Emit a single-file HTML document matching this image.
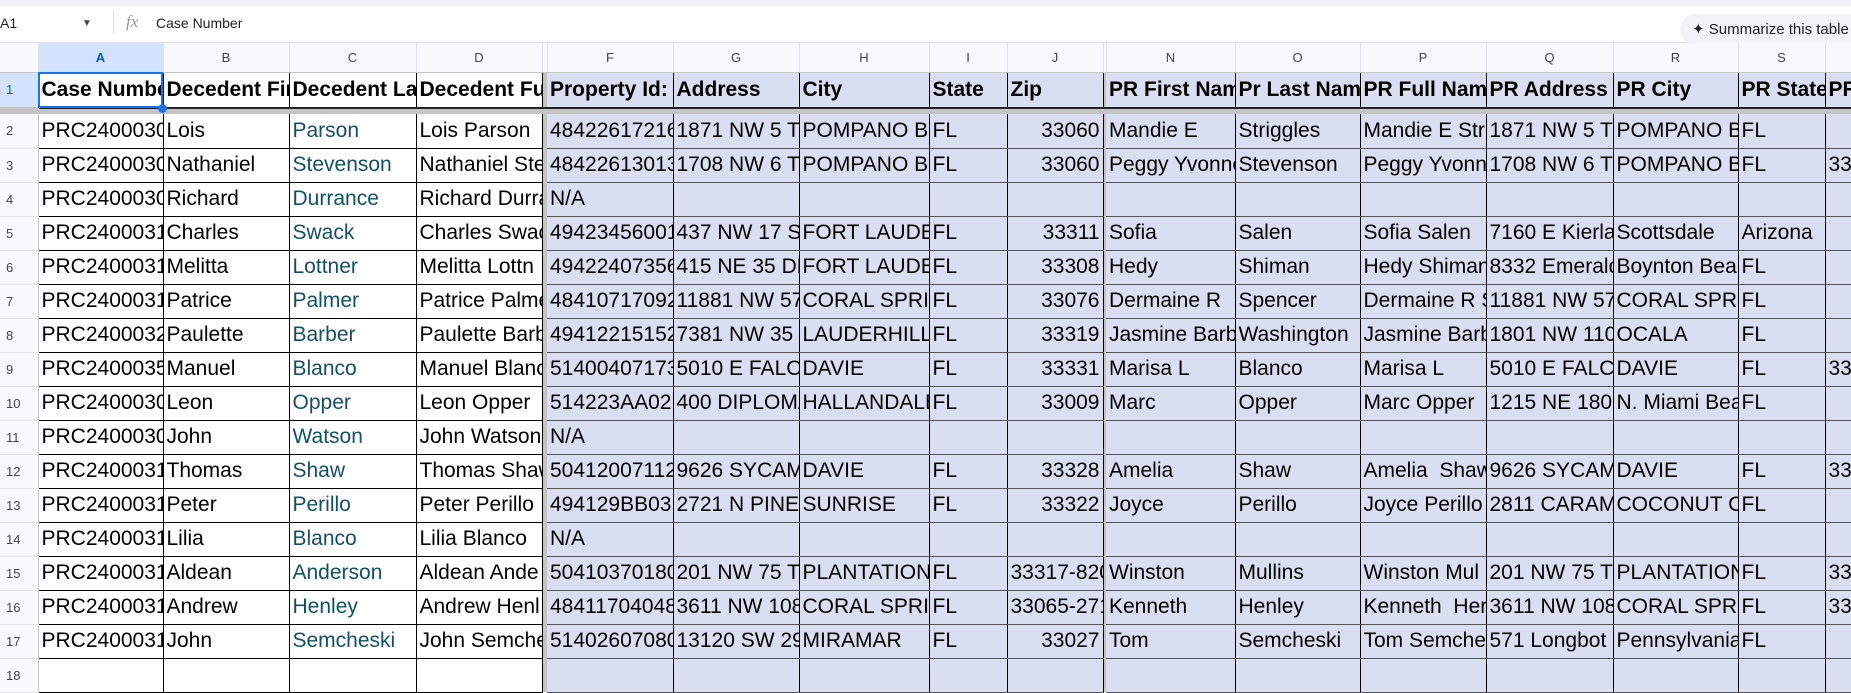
<!DOCTYPE html>
<html><head><meta charset="utf-8">
<style>
*{margin:0;padding:0;box-sizing:border-box}
body{width:1851px;height:660px;overflow:hidden;background:#fff;font-family:"Liberation Sans",sans-serif;position:relative}
.top{position:absolute;left:0;top:0;width:1851px;height:6px;background:#f0f2f5}
.fbar{position:absolute;left:0;top:6px;width:1851px;height:37px;background:#fff;border-bottom:1px solid #e1e3e6}
.fbar span{position:absolute;top:9px;font-size:14px;color:#202124}
.sum{position:absolute;left:1680px;top:8px;width:190px;height:30px;border-radius:15px;background:#f1f3f6;font-size:15px;color:#202124;padding:6px 0 0 12px;white-space:nowrap}
table{position:absolute;left:0;top:43px;border-collapse:collapse;table-layout:fixed;width:1851px}
td{overflow:hidden;white-space:nowrap;font-size:21px;color:#000;padding:0 3px;height:34px;border-right:1px solid #000;border-bottom:1px solid #000;vertical-align:middle}
tr.ch td{height:29px;background:#f8f9fa;font-size:13px;color:#444;text-align:center;border-right:1px solid #e1e3e6;border-bottom:1px solid #c4c7c5}
tr.ch td.sel{background:#d3e3fd;color:#0b57d0;font-weight:bold}
tr.hd td{height:36px;font-weight:bold;font-size:21px;border-bottom:2px solid #222}
tr.gb td{height:6px;background:#c4c4c4;border:none;padding:0}
td.rh{background:#f8f9fa;font-size:13px;color:#444;text-align:left;padding-left:6px;border-right:1px solid #c4c7c5;border-bottom:1px solid #e1e3e6}
tr.hd td.rh{background:#d3e3fd;color:#0b57d0;font-weight:normal;font-size:13px;border-bottom:2px solid #c4c4c4}
td.g{background:#c4c4c4;border:none;padding:0}
td.b{background:#d9dff0;border-bottom-color:#555}
td.c{color:#14505f;font-size:21px}
td.r{text-align:right}
td.ac{outline:2px solid #1a73e8;outline-offset:-2px}
</style></head><body>
<div class="top"></div>
<div class="fbar">
<span style="left:0">A1</span>
<span style="left:82px;font-size:10px;top:12px;color:#444">▼</span>
<span style="left:113px;top:5px;width:1px;height:22px;background:#ddd"></span>
<span style="left:126px;font-style:italic;font-family:'Liberation Serif',serif;font-size:17px;color:#999;top:6px">fx</span>
<span style="left:156px">Case Number</span>
<div class="sum">✦ Summarize this table</div>
</div>
<table>
<colgroup>
<col style="width:38px"><col style="width:125px"><col style="width:126px"><col style="width:127px"><col style="width:126px"><col style="width:5px"><col style="width:126px"><col style="width:126px"><col style="width:130px"><col style="width:78px"><col style="width:96px"><col style="width:3px"><col style="width:129px"><col style="width:125px"><col style="width:126px"><col style="width:127px"><col style="width:125px"><col style="width:87px"><col style="width:26px">
</colgroup>
<tr class="ch"><td></td><td class="sel">A</td><td>B</td><td>C</td><td>D</td><td class="g"></td><td>F</td><td>G</td><td>H</td><td>I</td><td>J</td><td class="g"></td><td>N</td><td>O</td><td>P</td><td>Q</td><td>R</td><td>S</td><td></td></tr>
<tr class="hd"><td class="rh">1</td><td class="ac">Case Number</td><td>Decedent First</td><td>Decedent Last</td><td>Decedent Full</td><td class="g"></td><td class="b">Property Id:</td><td class="b">Address</td><td class="b">City</td><td class="b">State</td><td class="b">Zip</td><td class="g"></td><td class="b">PR First Name</td><td class="b">Pr Last Name</td><td class="b">PR Full Name</td><td class="b">PR Address</td><td class="b">PR City</td><td class="b">PR State</td><td class="b">PR</td></tr>
<tr class="gb"><td colspan="19"></td></tr>
<tr><td class="rh">2</td><td>PRC2400030</td><td>Lois</td><td class="c">Parson</td><td>Lois Parson</td><td class="g"></td><td class="b">48422617216</td><td class="b">1871 NW 5 T</td><td class="b">POMPANO BE</td><td class="b">FL</td><td class="b r">33060</td><td class="g"></td><td class="b">Mandie E</td><td class="b">Striggles</td><td class="b">Mandie E Str</td><td class="b">1871 NW 5 T</td><td class="b">POMPANO B</td><td class="b">FL</td><td class="b"></td></tr>
<tr><td class="rh">3</td><td>PRC2400030</td><td>Nathaniel</td><td class="c">Stevenson</td><td>Nathaniel Ste</td><td class="g"></td><td class="b">48422613013</td><td class="b">1708 NW 6 T</td><td class="b">POMPANO BE</td><td class="b">FL</td><td class="b r">33060</td><td class="g"></td><td class="b">Peggy Yvonne</td><td class="b">Stevenson</td><td class="b">Peggy Yvonne</td><td class="b">1708 NW 6 T</td><td class="b">POMPANO B</td><td class="b">FL</td><td class="b">33</td></tr>
<tr><td class="rh">4</td><td>PRC2400030</td><td>Richard</td><td class="c">Durrance</td><td>Richard Durra</td><td class="g"></td><td class="b">N/A</td><td class="b"></td><td class="b"></td><td class="b"></td><td class="b"></td><td class="g"></td><td class="b"></td><td class="b"></td><td class="b"></td><td class="b"></td><td class="b"></td><td class="b"></td><td class="b"></td></tr>
<tr><td class="rh">5</td><td>PRC2400031</td><td>Charles</td><td class="c">Swack</td><td>Charles Swac</td><td class="g"></td><td class="b">49423456001</td><td class="b">437 NW 17 S</td><td class="b">FORT LAUDER</td><td class="b">FL</td><td class="b r">33311</td><td class="g"></td><td class="b">Sofia</td><td class="b">Salen</td><td class="b">Sofia Salen</td><td class="b">7160 E Kierla</td><td class="b">Scottsdale</td><td class="b">Arizona</td><td class="b"></td></tr>
<tr><td class="rh">6</td><td>PRC2400031</td><td>Melitta</td><td class="c">Lottner</td><td>Melitta Lottn</td><td class="g"></td><td class="b">49422407356</td><td class="b">415 NE 35 DR</td><td class="b">FORT LAUDER</td><td class="b">FL</td><td class="b r">33308</td><td class="g"></td><td class="b">Hedy</td><td class="b">Shiman</td><td class="b">Hedy Shiman</td><td class="b">8332 Emerald</td><td class="b">Boynton Bea</td><td class="b">FL</td><td class="b"></td></tr>
<tr><td class="rh">7</td><td>PRC2400031</td><td>Patrice</td><td class="c">Palmer</td><td>Patrice Palme</td><td class="g"></td><td class="b">48410717092</td><td class="b">11881 NW 57</td><td class="b">CORAL SPRIN</td><td class="b">FL</td><td class="b r">33076</td><td class="g"></td><td class="b">Dermaine R</td><td class="b">Spencer</td><td class="b">Dermaine R S</td><td class="b">11881 NW 57</td><td class="b">CORAL SPRIN</td><td class="b">FL</td><td class="b"></td></tr>
<tr><td class="rh">8</td><td>PRC2400032</td><td>Paulette</td><td class="c">Barber</td><td>Paulette Barb</td><td class="g"></td><td class="b">49412215152</td><td class="b">7381 NW 35</td><td class="b">LAUDERHILL</td><td class="b">FL</td><td class="b r">33319</td><td class="g"></td><td class="b">Jasmine Barb</td><td class="b">Washington</td><td class="b">Jasmine Barb</td><td class="b">1801 NW 110</td><td class="b">OCALA</td><td class="b">FL</td><td class="b"></td></tr>
<tr><td class="rh">9</td><td>PRC2400035</td><td>Manuel</td><td class="c">Blanco</td><td>Manuel Blanc</td><td class="g"></td><td class="b">51400407173</td><td class="b">5010 E FALCO</td><td class="b">DAVIE</td><td class="b">FL</td><td class="b r">33331</td><td class="g"></td><td class="b">Marisa L</td><td class="b">Blanco</td><td class="b">Marisa L</td><td class="b">5010 E FALCO</td><td class="b">DAVIE</td><td class="b">FL</td><td class="b">33</td></tr>
<tr><td class="rh">10</td><td>PRC2400030</td><td>Leon</td><td class="c">Opper</td><td>Leon Opper</td><td class="g"></td><td class="b">514223AA02</td><td class="b">400 DIPLOMA</td><td class="b">HALLANDALE</td><td class="b">FL</td><td class="b r">33009</td><td class="g"></td><td class="b">Marc</td><td class="b">Opper</td><td class="b">Marc Opper</td><td class="b">1215 NE 180</td><td class="b">N. Miami Bea</td><td class="b">FL</td><td class="b"></td></tr>
<tr><td class="rh">11</td><td>PRC2400030</td><td>John</td><td class="c">Watson</td><td>John Watson</td><td class="g"></td><td class="b">N/A</td><td class="b"></td><td class="b"></td><td class="b"></td><td class="b"></td><td class="g"></td><td class="b"></td><td class="b"></td><td class="b"></td><td class="b"></td><td class="b"></td><td class="b"></td><td class="b"></td></tr>
<tr><td class="rh">12</td><td>PRC2400031</td><td>Thomas</td><td class="c">Shaw</td><td>Thomas Shaw</td><td class="g"></td><td class="b">50412007112</td><td class="b">9626 SYCAM</td><td class="b">DAVIE</td><td class="b">FL</td><td class="b r">33328</td><td class="g"></td><td class="b">Amelia</td><td class="b">Shaw</td><td class="b">Amelia&nbsp; Shaw</td><td class="b">9626 SYCAM</td><td class="b">DAVIE</td><td class="b">FL</td><td class="b">33</td></tr>
<tr><td class="rh">13</td><td>PRC2400031</td><td>Peter</td><td class="c">Perillo</td><td>Peter Perillo</td><td class="g"></td><td class="b">494129BB03</td><td class="b">2721 N PINE</td><td class="b">SUNRISE</td><td class="b">FL</td><td class="b r">33322</td><td class="g"></td><td class="b">Joyce</td><td class="b">Perillo</td><td class="b">Joyce Perillo</td><td class="b">2811 CARAM</td><td class="b">COCONUT CR</td><td class="b">FL</td><td class="b"></td></tr>
<tr><td class="rh">14</td><td>PRC2400031</td><td>Lilia</td><td class="c">Blanco</td><td>Lilia Blanco</td><td class="g"></td><td class="b">N/A</td><td class="b"></td><td class="b"></td><td class="b"></td><td class="b"></td><td class="g"></td><td class="b"></td><td class="b"></td><td class="b"></td><td class="b"></td><td class="b"></td><td class="b"></td><td class="b"></td></tr>
<tr><td class="rh">15</td><td>PRC2400031</td><td>Aldean</td><td class="c">Anderson</td><td>Aldean Ande</td><td class="g"></td><td class="b">50410370180</td><td class="b">201 NW 75 T</td><td class="b">PLANTATION</td><td class="b">FL</td><td class="b">33317-820</td><td class="g"></td><td class="b">Winston</td><td class="b">Mullins</td><td class="b">Winston Mul</td><td class="b">201 NW 75 T</td><td class="b">PLANTATION</td><td class="b">FL</td><td class="b">33</td></tr>
<tr><td class="rh">16</td><td>PRC2400031</td><td>Andrew</td><td class="c">Henley</td><td>Andrew Henl</td><td class="g"></td><td class="b">48411704048</td><td class="b">3611 NW 108</td><td class="b">CORAL SPRIN</td><td class="b">FL</td><td class="b">33065-271</td><td class="g"></td><td class="b">Kenneth</td><td class="b">Henley</td><td class="b">Kenneth&nbsp; Her</td><td class="b">3611 NW 108</td><td class="b">CORAL SPRIN</td><td class="b">FL</td><td class="b">33</td></tr>
<tr><td class="rh">17</td><td>PRC2400031</td><td>John</td><td class="c">Semcheski</td><td>John Semche</td><td class="g"></td><td class="b">51402607080</td><td class="b">13120 SW 29</td><td class="b">MIRAMAR</td><td class="b">FL</td><td class="b r">33027</td><td class="g"></td><td class="b">Tom</td><td class="b">Semcheski</td><td class="b">Tom Semche</td><td class="b">571 Longbot</td><td class="b">Pennsylvania</td><td class="b">FL</td><td class="b"></td></tr>
<tr><td class="rh">18</td><td></td><td></td><td></td><td></td><td class="g"></td><td class="b"></td><td class="b"></td><td class="b"></td><td class="b"></td><td class="b"></td><td class="g"></td><td class="b"></td><td class="b"></td><td class="b"></td><td class="b"></td><td class="b"></td><td class="b"></td><td class="b"></td></tr>
</table>
<div style="position:absolute;left:158px;top:104px;width:9px;height:9px;border-radius:50%;background:#1a73e8"></div>
</body></html>
